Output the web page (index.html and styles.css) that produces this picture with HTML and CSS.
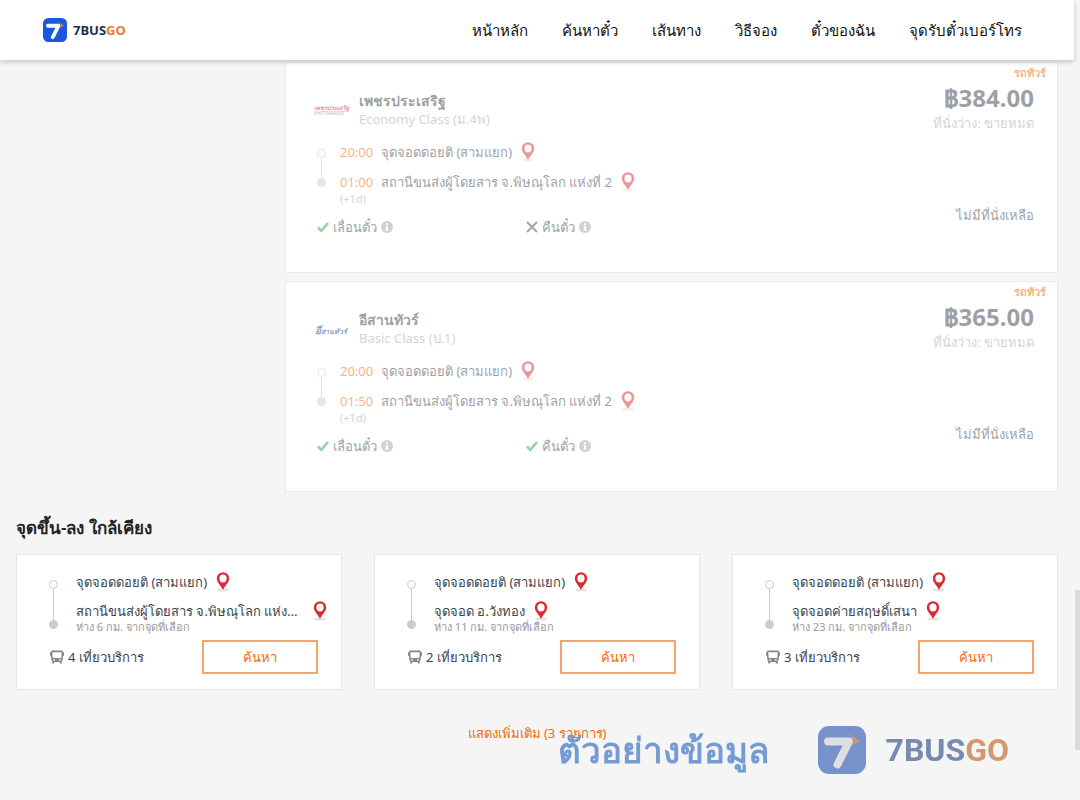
FILE: index.html
```html
<!DOCTYPE html>
<html lang="th">
<head>
<meta charset="utf-8">
<meta name="viewport" content="width=device-width, initial-scale=1">
<title>7BUSGO</title>
<link rel="stylesheet" href="styles.css">
</head>
<body>
<svg class="defs" width="0" height="0" aria-hidden="true">
  <symbol id="mark" viewBox="0 0 48 48">
    <rect width="48" height="48" rx="11" fill="var(--tile)"/>
    <path d="M10 15.500H31L19.500 38.500" fill="none" stroke="var(--seven)" stroke-width="7.800" stroke-linecap="round" stroke-linejoin="round"/>
    <path d="M30 7L42 15L33.500 20L36 14Z" fill="var(--spark)"/>
  </symbol>
  <symbol id="pin" viewBox="0 0 14 20">
    <ellipse cx="7" cy="18" rx="6" ry="1.600" fill="#e3e3e3"/>
    <path fill-rule="evenodd" fill="#dc2b32" d="M7 .2a6.200 6.200 0 0 0-6.200 6.200C.8 10 4.500 13 7 17.800 9.500 13 13.200 10 13.200 6.400A6.200 6.200 0 0 0 7 .2Zm0 2.400a3.600 3.900 0 1 1 0 7.800 3.600 3.900 0 0 1 0-7.800Z"/>
  </symbol>
  <symbol id="check" viewBox="0 0 12 12"><path d="M1 6.500L4.300 9.800L11 2" fill="none" stroke="#2fa84a" stroke-width="2.600"/></symbol>
  <symbol id="cross" viewBox="0 0 12 12"><path d="M1 1L11 11M11 1L1 11" fill="none" stroke="#4a4f55" stroke-width="2"/></symbol>
  <symbol id="info" viewBox="0 0 12 12"><circle cx="6" cy="6" r="6" fill="#a5a5a5"/><path d="M5 2.200h2v1.700H5zM4.400 5H7v3.500h.7v1.200H4.400V8.500H5V6.200h-.6z" fill="#fff"/></symbol>
  <symbol id="bus" viewBox="0 0 14 14">
    <path fill-rule="evenodd" fill="#858585" d="M2.500.5h9c1 0 1.500.7 1.500 1.700h1v3.600h-.9l-.6 4.700h-.7v3H9.800V12H4.200v1.500H2.200v-3h-.7L.9 5.800H0V2.200h1C1 1.200 1.500.5 2.500.5ZM2.200 2.200l.5 5.800h8.600l.5-5.800ZM3.200 9.200v1.300h2V9.200Zm5.600 0v1.300h2V9.200Z"/>
  </symbol>
</svg>

<header class="header">
  <a class="brand" href="#">
    <svg class="brand-mark"><use href="#mark"/></svg>
    <span class="brand-name">7BUS<span class="brand-go">GO</span></span>
  </a>
  <nav class="nav">
    <a href="#">หน้าหลัก</a>
    <a href="#">ค้นหาตั๋ว</a>
    <a href="#">เส้นทาง</a>
    <a href="#">วิธีจอง</a>
    <a href="#">ตั๋วของฉัน</a>
    <a href="#">จุดรับตั๋วเบอร์โทร</a>
  </nav>
</header>

<main class="page">
  <section class="results">
    <article class="trip">
      <div class="trip-body">
        <div class="operator">
          <svg class="operator-logo" viewBox="0 0 36 14" role="img" aria-label="PHETPRASERT"><text class="logo-red" x="0" y="7">เพชรประเสริฐ</text><text class="logo-grey" x="0" y="12">PHETPRASERT</text></svg>
          <div>
            <h3 class="operator-name">เพชรประเสริฐ</h3>
            <p class="operator-class">Economy Class (ม.4พ)</p>
          </div>
        </div>
        <div class="route">
          <div class="line"></div>
          <div class="stops">
            <div class="stop"><time>20:00</time><span>จุดจอดดอยติ (สามแยก)</span><svg class="pin"><use href="#pin"/></svg></div>
            <div>
              <div class="stop"><time>01:00</time><span>สถานีขนส่งผู้โดยสาร จ.พิษณุโลก แห่งที่ 2</span><svg class="pin"><use href="#pin"/></svg></div>
              <p class="next-day">(+1d)</p>
            </div>
          </div>
        </div>
        <div class="policies">
          <span class="policy"><svg class="small"><use href="#check"/></svg>เลื่อนตั๋ว<svg class="small"><use href="#info"/></svg></span>
          <span class="policy"><svg class="small"><use href="#cross"/></svg>คืนตั๋ว<svg class="small"><use href="#info"/></svg></span>
        </div>
      </div>
      <div class="fare">
        <span class="badge">รถทัวร์</span>
        <strong class="price">฿384.00</strong>
        <span class="seats">ที่นั่งว่าง: ขายหมด</span>
        <span class="sold">ไม่มีที่นั่งเหลือ</span>
      </div>
    </article>

    <article class="trip">
      <div class="trip-body">
        <div class="operator">
          <svg class="operator-logo" viewBox="0 0 36 14" role="img" aria-label="อีสานทัวร์"><text class="logo-blue" x="1" y="12"><tspan class="logo-first">อี</tspan>สานทัวร์</text></svg>
          <div>
            <h3 class="operator-name">อีสานทัวร์</h3>
            <p class="operator-class">Basic Class (ป.1)</p>
          </div>
        </div>
        <div class="route">
          <div class="line"></div>
          <div class="stops">
            <div class="stop"><time>20:00</time><span>จุดจอดดอยติ (สามแยก)</span><svg class="pin"><use href="#pin"/></svg></div>
            <div>
              <div class="stop"><time>01:50</time><span>สถานีขนส่งผู้โดยสาร จ.พิษณุโลก แห่งที่ 2</span><svg class="pin"><use href="#pin"/></svg></div>
              <p class="next-day">(+1d)</p>
            </div>
          </div>
        </div>
        <div class="policies">
          <span class="policy"><svg class="small"><use href="#check"/></svg>เลื่อนตั๋ว<svg class="small"><use href="#info"/></svg></span>
          <span class="policy"><svg class="small"><use href="#check"/></svg>คืนตั๋ว<svg class="small"><use href="#info"/></svg></span>
        </div>
      </div>
      <div class="fare">
        <span class="badge">รถทัวร์</span>
        <strong class="price">฿365.00</strong>
        <span class="seats">ที่นั่งว่าง: ขายหมด</span>
        <span class="sold">ไม่มีที่นั่งเหลือ</span>
      </div>
    </article>
  </section>

  <section class="nearby">
    <h2 class="nearby-title">จุดขึ้น-ลง ใกล้เคียง</h2>
    <div class="nearby-grid">
      <article class="near">
        <div class="route">
          <div class="line"></div>
          <div class="stops">
            <div class="stop"><span>จุดจอดดอยติ (สามแยก)</span><svg class="pin"><use href="#pin"/></svg></div>
            <div>
              <div class="stop"><span>สถานีขนส่งผู้โดยสาร จ.พิษณุโลก แห่งที่ 2</span><svg class="pin"><use href="#pin"/></svg></div>
              <p class="distance">ห่าง 6 กม. จากจุดที่เลือก</p>
            </div>
          </div>
        </div>
        <div class="near-foot"><span class="services"><svg class="bus"><use href="#bus"/></svg>4 เที่ยวบริการ</span><button class="search" type="button">ค้นหา</button></div>
      </article>
      <article class="near">
        <div class="route">
          <div class="line"></div>
          <div class="stops">
            <div class="stop"><span>จุดจอดดอยติ (สามแยก)</span><svg class="pin"><use href="#pin"/></svg></div>
            <div>
              <div class="stop"><span>จุดจอด อ.วังทอง</span><svg class="pin"><use href="#pin"/></svg></div>
              <p class="distance">ห่าง 11 กม. จากจุดที่เลือก</p>
            </div>
          </div>
        </div>
        <div class="near-foot"><span class="services"><svg class="bus"><use href="#bus"/></svg>2 เที่ยวบริการ</span><button class="search" type="button">ค้นหา</button></div>
      </article>
      <article class="near">
        <div class="route">
          <div class="line"></div>
          <div class="stops">
            <div class="stop"><span>จุดจอดดอยติ (สามแยก)</span><svg class="pin"><use href="#pin"/></svg></div>
            <div>
              <div class="stop"><span>จุดจอดค่ายสฤษดิ์เสนา</span><svg class="pin"><use href="#pin"/></svg></div>
              <p class="distance">ห่าง 23 กม. จากจุดที่เลือก</p>
            </div>
          </div>
        </div>
        <div class="near-foot"><span class="services"><svg class="bus"><use href="#bus"/></svg>3 เที่ยวบริการ</span><button class="search" type="button">ค้นหา</button></div>
      </article>
    </div>
    <a class="more" href="#">แสดงเพิ่มเติม (3 รายการ)</a>
  </section>
</main>

<div class="watermark">
  <span class="sample">ตัวอย่างข้อมูล</span>
  <svg class="watermark-mark"><use href="#mark"/></svg>
  <span class="watermark-name">7BUS<span class="watermark-go">GO</span></span>
</div>
<div class="scroll-thumb"></div>
</body>
</html>
```

FILE: styles.css
```css
*, *::before, *::after { box-sizing: border-box; }

body {
  margin: 0;
  padding-right: 6px;
  min-height: 100vh;
  overflow: hidden;
  background: #f5f5f5;
  color: #3c444d;
  font: 13px/20px "Noto Sans", "Open Sans", sans-serif;
}

h2, h3, p { margin: 0; }
a { color: inherit; text-decoration: none; }
svg { display: block; flex: none; }
.defs { position: absolute; }

.header {
  position: relative;
  z-index: 2;
  display: flex;
  align-items: center;
  justify-content: space-between;
  height: 60px;
  padding: 0 52px 0 43px;
  background: #fff;
  box-shadow: 0 2px 5px rgba(0, 0, 0, .2);
}

.brand { display: flex; align-items: center; gap: 6px; }
.brand-mark {
  --tile: #1958dd;
  --seven: #fff;
  --spark: #e8792f;
  width: 24px;
  height: 24px;
}
.brand-name { color: #1b2f52; font-size: 13px; font-weight: 700; }
.brand-go { color: #ea7a2b; }

.nav { display: flex; gap: 34px; color: #111; font-size: 15px; }

.page { padding: 2px 16px 0; }

.results {
  display: grid;
  gap: 8px;
  margin-left: 269px;
}

.trip {
  display: flex;
  justify-content: space-between;
  padding: 0 11px 0 28px;
  background: #fff;
  border: 1px solid #ebebeb;
}
.trip-body { flex: 1; padding: 29px 0 35px; }
.trip-body > *, .fare > * { opacity: .5; }

.operator { display: flex; align-items: center; gap: 9px; line-height: 18px; }
.operator-logo { width: 36px; height: 14px; overflow: visible; }
.operator-name { font-size: 14px; font-weight: 600; }
.operator-class { color: #aaa; font-size: 13px; }
.logo-red { fill: #e32636; font-size: 6px; font-style: italic; font-weight: 700; }
.logo-grey { fill: #777; font-size: 5px; font-style: italic; }
.logo-blue { fill: #2540a0; font-size: 7px; font-style: italic; font-weight: 700; }
.logo-first { font-size: 10px; }

.route { display: flex; }
.stops { display: grid; gap: 10px; }
.stop { display: flex; align-items: center; }
.stop time { width: 41px; color: #f26a0a; }
.pin { width: 14px; height: 20px; margin-left: 9px; }

.line {
  position: relative;
  width: 1px;
  background: #ccc;
}
.line::before, .line::after {
  content: "";
  position: absolute;
  left: -4px;
  width: 9px;
  height: 9px;
  border: 1px solid #ccc;
  border-radius: 50%;
}
.line::before { top: 0; background: #fff; }
.line::after { bottom: 0; background: #ccc; }

.trip .route { padding: 14px 0 11px 7px; gap: 18px; }
.trip .line { height: 38px; margin-top: 7px; }
.next-day { color: #aaa; font-size: 11px; line-height: 14px; }

.policies { display: grid; grid-template-columns: 209px 1fr; padding-left: 3px; }
.policy { display: flex; align-items: center; gap: 4px; }
.small { width: 12px; height: 12px; }

.fare { display: flex; flex-direction: column; align-items: flex-end; padding-right: 12px; }
.badge {
  margin: 2px -12px 0 0;
  color: #f26a0a;
  font-size: 11px;
  font-weight: 700;
  line-height: 16px;
}
.price { font-size: 24px; line-height: 34px; }
.seats { color: #aaa; line-height: 16px; }
.sold { margin-top: 74px; }

.nearby { display: grid; padding-top: 24px; }
.nearby-title { color: #222; font-size: 17px; font-weight: 600; line-height: 24px; }
.nearby-grid { display: grid; grid-template-columns: repeat(3, minmax(0, 1fr)); gap: 32px; margin-top: 14px; }

.near { padding: 17px 15px 15px 33px; background: #fff; border: 1px solid #e6e8e8; }
.near .route { gap: 22px; padding-left: 3px; }
.near .line { height: 49px; margin-top: 8px; flex: none; }
.near .stops { gap: 9px; min-width: 0; }
.near .stop span { max-width: 228px; overflow: hidden; text-overflow: ellipsis; white-space: nowrap; }
.distance { color: #999; font-size: 11px; line-height: 12px; }
.near-foot { display: flex; justify-content: space-between; margin-top: 7px; padding-right: 8px; }
.services { display: flex; align-items: center; gap: 4px; }
.bus { width: 14px; height: 14px; }
.search {
  width: 116px;
  height: 34px;
  border: 2px solid #f7a468;
  background: #fff;
  color: #f26a0a;
  font: inherit;
}

.more { justify-self: center; margin-top: 33px; color: #f26a0a; }

.watermark {
  position: fixed;
  right: 71px;
  bottom: 20px;
  display: flex;
  align-items: center;
  height: 60px;
  pointer-events: none;
}
.sample { color: #749bd3; font-size: 35px; font-weight: 600; line-height: 60px; }
.watermark-mark {
  --tile: #7791cb;
  --seven: #dfdfdf;
  --spark: #cf9677;
  width: 48px;
  height: 48px;
  margin: 0 20px 0 49px;
}
.watermark-name { color: #778bb0; font: 700 32px/40px Roboto, sans-serif; }
.watermark-go { color: #d2986f; }

.scroll-thumb {
  position: fixed;
  top: 590px;
  right: 0;
  width: 5px;
  height: 160px;
  background: #dcdcdc;
}
```
